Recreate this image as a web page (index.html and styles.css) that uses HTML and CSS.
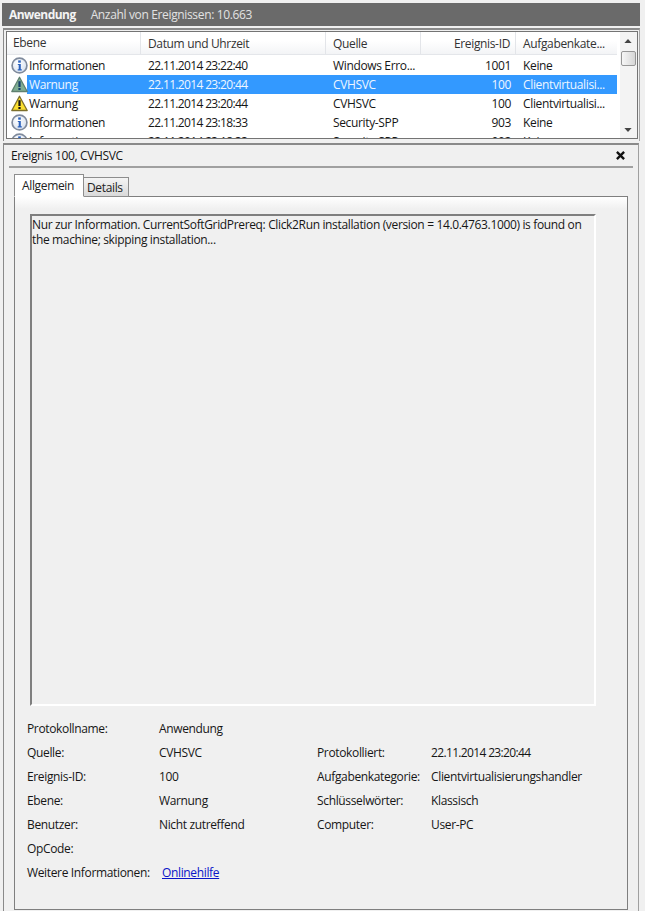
FILE: index.html
```html
<!DOCTYPE html>
<html lang="de">
<head>
<meta charset="utf-8">
<title>Ereignisanzeige</title>
<link rel="stylesheet" href="styles.css">
</head>
<body>
<svg class="defs" width="0" height="0" aria-hidden="true">
  <defs>
    <radialGradient id="infoFill" cx="0.4" cy="0.35" r="0.75">
      <stop offset="0" stop-color="#ffffff"/>
      <stop offset="1" stop-color="#d3deee"/>
    </radialGradient>
    <symbol id="info" viewBox="0 0 17 17">
      <circle cx="8.500" cy="8.500" r="7.400" fill="url(#infoFill)" stroke="#7f8a9c" stroke-width="1.700"/>
      <rect x="7.200" y="3.400" width="2.600" height="2.300" fill="#2b62bd"/>
      <path d="M6.800 6.900h3v5.400h1v1.100H6.700v-1.100h1V8H6.800z" fill="#2b62bd"/>
    </symbol>
    <symbol id="warn" viewBox="0 0 17 17">
      <path d="M8.500 1.200 16.200 15.500H.8z" fill="#fbdf2e" stroke="#7d6f2c" stroke-width="1.300" stroke-linejoin="round"/>
      <rect x="7.400" y="5.200" width="2.200" height="5.800" fill="#111"/>
      <rect x="7.400" y="12" width="2.200" height="2" fill="#111"/>
    </symbol>
    <symbol id="warn-sel" viewBox="0 0 17 17">
      <path d="M8.500 1.200 16.200 15.500H.8z" fill="#7fae93" stroke="#5f8070" stroke-width="1.300" stroke-linejoin="round"/>
      <rect x="7.400" y="5.200" width="2.200" height="5.800" fill="#17406a"/>
      <rect x="7.400" y="12" width="2.200" height="2" fill="#17406a"/>
    </symbol>
  </defs>
</svg>
<div class="window">
  <header class="titlebar">
    <strong class="log-name">Anwendung</strong>
    <span class="log-count">Anzahl von Ereignissen: 10.663</span>
  </header>
  <section class="listbox">
    <div class="listinner">
      <div class="listmain">
        <div class="row head">
          <div class="cell c1">Ebene</div>
          <div class="cell c2">Datum und Uhrzeit</div>
          <div class="cell c3">Quelle</div>
          <div class="cell c4">Ereignis-ID</div>
          <div class="cell c5">Aufgabenkate...</div>
        </div>
        <div class="rows">
          <div class="row">
            <div class="cell c1"><svg class="ico"><use href="#info"/></svg><span>Informationen</span></div>
            <div class="cell c2 num">22.11.2014 23:22:40</div>
            <div class="cell c3">Windows Erro...</div>
            <div class="cell c4">1001</div>
            <div class="cell c5">Keine</div>
          </div>
          <div class="row selected">
            <div class="cell c1"><svg class="ico"><use href="#warn-sel"/></svg><span>Warnung</span></div>
            <div class="cell c2 num">22.11.2014 23:20:44</div>
            <div class="cell c3">CVHSVC</div>
            <div class="cell c4">100</div>
            <div class="cell c5">Clientvirtualisi...</div>
          </div>
          <div class="row">
            <div class="cell c1"><svg class="ico"><use href="#warn"/></svg><span>Warnung</span></div>
            <div class="cell c2 num">22.11.2014 23:20:44</div>
            <div class="cell c3">CVHSVC</div>
            <div class="cell c4">100</div>
            <div class="cell c5">Clientvirtualisi...</div>
          </div>
          <div class="row">
            <div class="cell c1"><svg class="ico"><use href="#info"/></svg><span>Informationen</span></div>
            <div class="cell c2 num">22.11.2014 23:18:33</div>
            <div class="cell c3">Security-SPP</div>
            <div class="cell c4">903</div>
            <div class="cell c5">Keine</div>
          </div>
          <div class="row">
            <div class="cell c1"><svg class="ico"><use href="#info"/></svg><span>Informationen</span></div>
            <div class="cell c2 num">22.11.2014 23:18:33</div>
            <div class="cell c3">Security-SPP</div>
            <div class="cell c4">902</div>
            <div class="cell c5">Keine</div>
          </div>
        </div>
      </div>
      <div class="scrollbar">
        <svg class="arrow up" viewBox="0 0 9 5"><path d="M4.500 0 9 5H0z" fill="#444"/></svg>
        <div class="thumb"></div>
        <div class="track"></div>
        <svg class="arrow down" viewBox="0 0 9 5"><path d="M0 0h9L4.500 5z" fill="#444"/></svg>
      </div>
    </div>
  </section>
  <section class="detail">
    <div class="detail-head">
      <span>Ereignis 100, CVHSVC</span>
      <svg class="close" viewBox="0 0 10 10"><path d="M1 1l8 8M9 1l-8 8" stroke="#111" stroke-width="2.600" fill="none"/></svg>
    </div>
    <div class="tabs">
      <div class="tab active">Allgemein</div>
      <div class="tab">Details</div>
    </div>
    <div class="panel">
      <div class="message">Nur zur Information. CurrentSoftGridPrereq: Click2Run installation (version = 14.0.4763.1000) is found on the machine; skipping installation...</div>
      <div class="fields">
        <div class="lab">Protokollname:</div><div class="val wide">Anwendung</div>
        <div class="lab">Quelle:</div><div class="val">CVHSVC</div><div class="lab">Protokolliert:</div><div class="val num">22.11.2014 23:20:44</div>
        <div class="lab">Ereignis-ID:</div><div class="val">100</div><div class="lab">Aufgabenkategorie:</div><div class="val">Clientvirtualisierungshandler</div>
        <div class="lab">Ebene:</div><div class="val">Warnung</div><div class="lab">Schlüsselwörter:</div><div class="val">Klassisch</div>
        <div class="lab">Benutzer:</div><div class="val">Nicht zutreffend</div><div class="lab">Computer:</div><div class="val">User-PC</div>
        <div class="lab">OpCode:</div><div class="val wide"></div>
        <div class="lab">Weitere Informationen:</div><div class="val wide"><a class="link" href="#">Onlinehilfe</a></div>
      </div>
    </div>
  </section>
</div>
</body>
</html>
```
FILE: styles.css
```css
* { box-sizing: border-box; }
html, body { margin: 0; padding: 0; height: 100%; }
body {
  background: #f0f0f0;
  color: #161616;
  font: 12px/16px "Open Sans", "Noto Sans", "Liberation Sans", sans-serif;
  letter-spacing: -0.35px;
  overflow: hidden;
}
.defs { position: absolute; }
.num { letter-spacing: -0.65px; }
.window { width: 645px; height: 911px; padding: 3px 0 0 2px; }

.titlebar {
  width: 638px;
  height: 23px;
  background: #6a6a6a;
  display: flex;
  align-items: center;
  padding-left: 7px;
  gap: 15px;
}
.log-name { font-weight: 700; color: #f4f4f4; letter-spacing: -0.55px; }
.log-count { color: #e2e2e2; }

.listbox {
  width: 637px;
  height: 113px;
  margin: 2px 0 0 1px;
  padding: 1px 0 0 2px;
  border-top: 2px solid #8a8a8a;
  border-left: 1px solid #8a8a8a;
  border-right: 1px solid #a8a8a8;
}
.listinner {
  display: flex;
  width: 632px;
  height: 108px;
  border: 1px solid #747474;
}
.listmain {
  width: 610px;
  height: 106px;
  background: #fff;
  overflow: hidden;
}
.row {
  display: grid;
  grid-template-columns: 134px 185px 95px 95px 100px;
  height: 19px;
  align-items: center;
  white-space: nowrap;
}
.rows .row:first-child { height: 20px; }
.head {
  height: 23px;
  color: #333;
  background: linear-gradient(#ffffff 40%, #f3f4f6);
  border-bottom: 1px solid #e4e6ea;
}
.head .cell { height: 22px; padding-top: 0; line-height: 24px; border-right: 1px solid #e3e5e9; }
.head .c1 { padding-left: 6px; }
.head .c5 { border-right: 0; }
.rows { background: #fff; }
.cell { padding-left: 7px; padding-top: 1px; overflow: hidden; }
.c1 { padding-left: 4px; display: flex; align-items: center; }
.c4 { padding-right: 5px; padding-left: 0; text-align: right; }
.ico { width: 17px; height: 17px; flex: none; margin: -1px 1px 0 0; }
.selected { color: #eef6ff; background: linear-gradient(90deg, #fff 20px, #3399ff 20px); }

.scrollbar {
  width: 20px;
  height: 106px;
  padding-left: 2px;
  background: linear-gradient(90deg, #fff 3px, #f3f3f3 3px);
  display: flex;
  flex-direction: column;
  align-items: center;
}
.arrow { width: 8px; height: 4px; flex: none; }
.arrow.up { margin: 7px 0 8px; }
.arrow.down { margin-bottom: 6px; }
.thumb {
  width: 15px;
  height: 15px;
  flex: none;
  border: 1px solid #969696;
  border-radius: 2px;
  background: linear-gradient(90deg, #f6f6f6, #d6d6d6);
}
.track { flex: 1; }

.detail {
  width: 636px;
  height: 768px;
  margin: 2px 0 0 1px;
  border-top: 2px solid #8a8a8a;
  border-left: 1px solid #8a8a8a;
  border-right: 1px solid #a0a0a0;
  padding-left: 10px;
}
.detail-head {
  width: 624px;
  height: 23px;
  margin-left: -5px;
  border-bottom: 2px solid #a0a0a0;
  display: flex;
  align-items: center;
  justify-content: space-between;
  padding: 0 8px 0 2px;
}
.close { width: 9px; height: 9px; }
.tabs { display: flex; align-items: flex-end; height: 29px; margin-bottom: -1px; position: relative; }
.tab {
  width: 45px;
  height: 20px;
  line-height: 19px;
  padding-left: 3px;
  background: linear-gradient(#f4f4f4, #d9d9d9);
  border: 1px solid #8d8d8d;
  border-left: 0;
  color: #222;
}
.tab.active {
  width: 70px;
  height: 23px;
  line-height: 21px;
  padding-left: 7px;
  background: #fff;
  border-left: 1px solid #8d8d8d;
  border-bottom: 1px solid #fff;
}
.panel {
  width: 614px;
  height: 714px;
  border: 1px solid #7f7f7f;
  background: linear-gradient(#ffffff, #f0f0f0 12px);
  padding: 17px 0 0 15px;
}
.message {
  width: 566px;
  height: 492px;
  padding-top: 1px;
  line-height: 15px;
  border-top: 2px solid #7f7f7f;
  border-left: 2px solid #7f7f7f;
  border-right: 2px solid #fff;
  border-bottom: 2px solid #fff;
  background: #f0f0f0;
}
.fields {
  display: grid;
  grid-template-columns: 132px 158px 114px 1fr;
  grid-auto-rows: 24px;
  align-items: center;
  margin: 11px 0 0 -3px;
  white-space: nowrap;
}
.wide { grid-column: 2 / span 3; }
.link { color: #0a14c8; margin-left: 3px; text-decoration: underline; }
```
